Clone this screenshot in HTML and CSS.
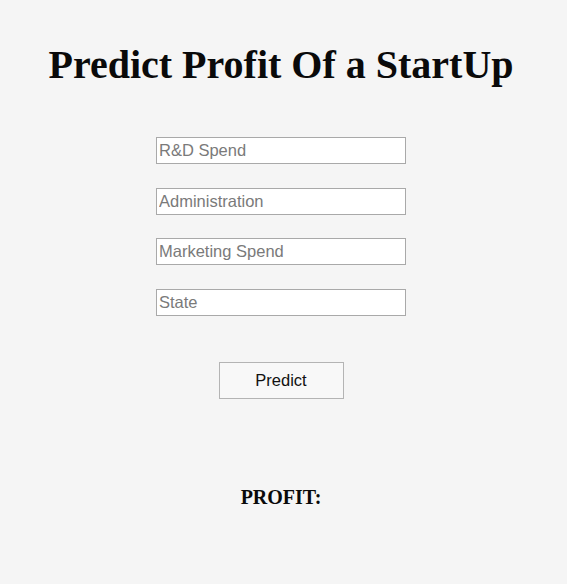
FILE: index.html
```html
<!DOCTYPE html>
<html>
<head>
<meta charset="utf-8">
<title>Predict Profit</title>
<link rel="stylesheet" href="styles.css">
</head>
<body>
<main class="page">
  <h1 class="title">Predict Profit Of a StartUp</h1>
  <form class="form">
    <input class="field" type="text" placeholder="R&amp;D Spend">
    <input class="field" type="text" placeholder="Administration">
    <input class="field" type="text" placeholder="Marketing Spend">
    <input class="field" type="text" placeholder="State">
    <button class="btn" type="button">Predict</button>
  </form>
  <p class="result">PROFIT:</p>
</main>
</body>
</html>
```
FILE: styles.css
```css
html, body {
  margin: 0;
  padding: 0;
  background: #f5f5f5;
}
.page {
  display: flex;
  flex-direction: column;
  align-items: center;
  padding-right: 5px;
  font-family: "Liberation Serif", "Times New Roman", serif;
  color: #0a0a0a;
}
.title {
  margin: 42px 0 0;
  font-size: 40px;
  font-weight: bold;
  line-height: 46px;
}
.form {
  display: flex;
  flex-direction: column;
  align-items: center;
  margin-top: 49px;
  gap: 23.5px;
}
.field {
  box-sizing: border-box;
  width: 250px;
  height: 27px;
  margin: 0;
  padding: 1px 2px;
  border: 1px solid #a9a9a9;
  background: #ffffff;
  font-family: "Liberation Sans", Arial, sans-serif;
  font-size: 16.5px;
  color: #222;
}
.field::placeholder {
  color: #7a7a7a;
  opacity: 1;
}
.btn {
  box-sizing: border-box;
  width: 125px;
  height: 37px;
  margin-top: 23px;
  border: 1px solid #b4b4b4;
  background: #f8f8f8;
  font-family: "Liberation Sans", Arial, sans-serif;
  font-size: 16.5px;
  color: #111;
}
.result {
  margin: 87px 0 0;
  font-size: 20px;
  font-weight: bold;
  line-height: 22px;
}
```
